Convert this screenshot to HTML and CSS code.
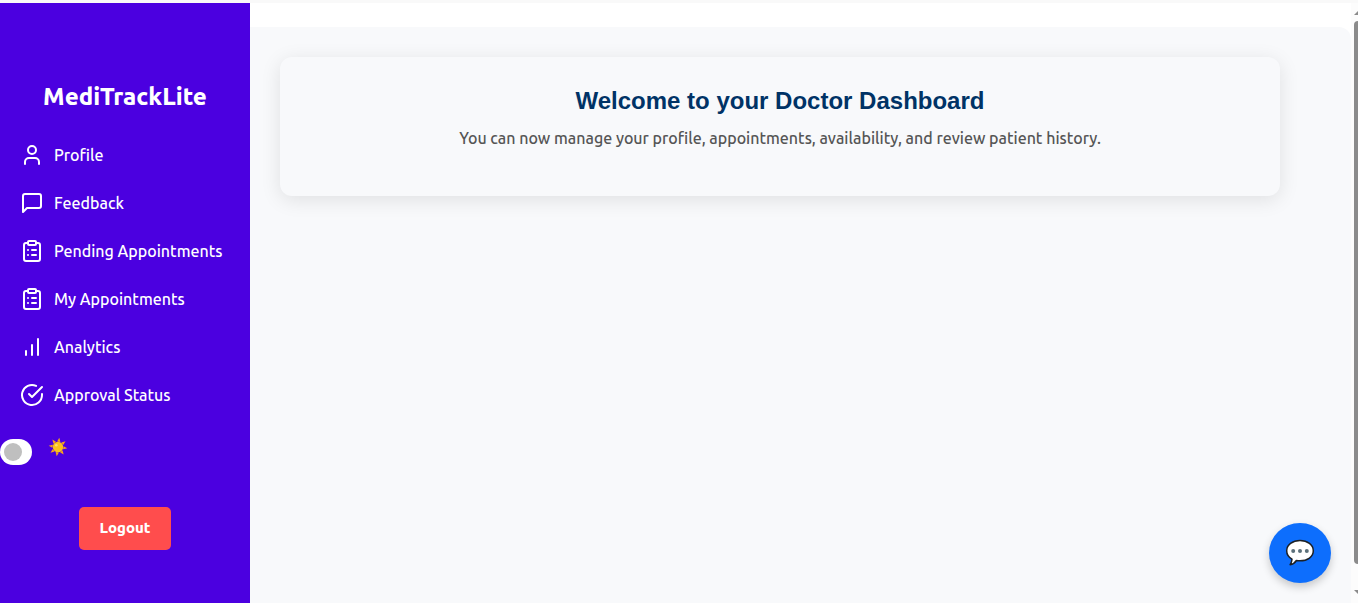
FILE: index.html
```html
<!DOCTYPE html>
<html lang="en">
<head>
<meta charset="utf-8">
<meta name="viewport" content="width=device-width, initial-scale=1">
<title>MediTrackLite</title>
<link rel="stylesheet" href="styles.css">
</head>
<body>
<div class="app">
  <aside class="sidebar">
    <h2 class="brand">MediTrackLite</h2>
    <nav class="menu">
      <a class="menu-link" href="#profile">
        <svg class="icon" viewBox="0 0 24 24" aria-hidden="true"><circle cx="12" cy="7" r="4"/><path d="M5 21v-2a4 4 0 0 1 4-4h6a4 4 0 0 1 4 4v2"/></svg>
        <span>Profile</span>
      </a>
      <a class="menu-link" href="#feedback">
        <svg class="icon" viewBox="0 0 24 24" aria-hidden="true"><path d="M21 15a2 2 0 0 1-2 2H7l-4 4V5a2 2 0 0 1 2-2h14a2 2 0 0 1 2 2z"/></svg>
        <span>Feedback</span>
      </a>
      <a class="menu-link" href="#pending">
        <svg class="icon" viewBox="0 0 24 24" aria-hidden="true"><rect x="8" y="2" width="8" height="4" rx="1"/><path d="M16 4h2a2 2 0 0 1 2 2v14a2 2 0 0 1-2 2H6a2 2 0 0 1-2-2V6a2 2 0 0 1 2-2h2M12 11h4M12 16h4M8 11h.01M8 16h.01"/></svg>
        <span>Pending Appointments</span>
      </a>
      <a class="menu-link" href="#appointments">
        <svg class="icon" viewBox="0 0 24 24" aria-hidden="true"><rect x="8" y="2" width="8" height="4" rx="1"/><path d="M16 4h2a2 2 0 0 1 2 2v14a2 2 0 0 1-2 2H6a2 2 0 0 1-2-2V6a2 2 0 0 1 2-2h2M12 11h4M12 16h4M8 11h.01M8 16h.01"/></svg>
        <span>My Appointments</span>
      </a>
      <a class="menu-link" href="#analytics">
        <svg class="icon" viewBox="0 0 24 24" aria-hidden="true"><path d="M6 20v-4M12 20V10M18 20V4"/></svg>
        <span>Analytics</span>
      </a>
      <a class="menu-link" href="#approval">
        <svg class="icon" viewBox="0 0 24 24" aria-hidden="true"><path d="M22 11.08V12a10 10 0 1 1-5.93-9.14"/><path d="M22 4L12 14.01l-3-3"/></svg>
        <span>Approval Status</span>
      </a>
    </nav>
    <div class="theme">
      <input class="theme-switch" type="checkbox" role="switch" id="theme" aria-label="Dark mode">
      <label class="theme-label" for="theme">
        <svg class="sun" viewBox="0 0 20 20" aria-hidden="true">
          <g fill="#f9a21b" transform="rotate(8 10 10)">
            <path id="ray" d="M8.4 4.600 10 .6l1.600 4z"/>
            <use href="#ray" transform="rotate(45 10 10)"/>
            <use href="#ray" transform="rotate(90 10 10)"/>
            <use href="#ray" transform="rotate(135 10 10)"/>
            <use href="#ray" transform="rotate(180 10 10)"/>
            <use href="#ray" transform="rotate(225 10 10)"/>
            <use href="#ray" transform="rotate(270 10 10)"/>
            <use href="#ray" transform="rotate(315 10 10)"/>
          </g>
          <circle cx="10" cy="10" r="5.2" fill="#fcc21b"/>
          <circle cx="8.3" cy="8.2" r="1.3" fill="#fddc6c"/>
        </svg>
      </label>
    </div>
    <button class="logout" type="button">Logout</button>
  </aside>
  <main class="main">
    <div class="panel">
      <section class="card">
        <h1 class="card-title">Welcome to your Doctor Dashboard</h1>
        <p class="card-text">You can now manage your profile, appointments, availability, and review patient history.</p>
      </section>
    </div>
  </main>
  <div class="scrollbar" aria-hidden="true">
    <svg class="arrow" viewBox="0 0 10 6"><path d="M5 1 10 6H0z"/></svg>
    <div class="thumb"></div>
    <svg class="arrow" viewBox="0 0 10 6"><path d="M0 0h10L5 5z"/></svg>
  </div>
</div>
<button class="chat" type="button" aria-label="Open chat">
  <svg class="bubble" viewBox="0 0 30 30" aria-hidden="true">
    <path d="M15 2.500C7.500 2.500 1.700 6.800 1.700 12.800c0 3.700 2.100 6.600 5.300 8.300-.1 2-.8 4-1.900 5.600 2.800-.4 5-2 6.300-4.200 1.100.2 2.400.3 3.600.3 7.500 0 13.300-4 13.300-10S22.500 2.500 15 2.500z" fill="#fff" stroke="#1c2025" stroke-width="1.500" stroke-linejoin="round"/>
    <g fill="#5c707a"><circle cx="8.200" cy="13" r="2"/><circle cx="15" cy="13" r="2"/><circle cx="21.800" cy="13" r="2"/></g>
  </svg>
</button>
</body>
</html>
```
FILE: styles.css
```css
* {
  box-sizing: border-box;
}

body {
  margin: 0;
  background: #f9f9f9;
  font-family: Ubuntu, "Noto Sans", sans-serif;
  font-size: 16px;
  font-weight: 500;
  line-height: 24px;
}

.app {
  display: flex;
  min-height: 100vh;
  padding-top: 3px;
}

.sidebar {
  display: flex;
  flex: 0 0 250px;
  flex-direction: column;
  padding-top: 76px;
  background: #4b00e0;
  color: #fff;
}

.brand {
  margin: 0 0 16px;
  font-size: 24px;
  font-weight: 800;
  line-height: 36px;
  text-align: center;
}

.menu {
  display: flex;
  flex-direction: column;
}

.menu-link {
  display: flex;
  align-items: center;
  gap: 10px;
  height: 48px;
  padding: 0 20px;
  color: #fff;
  text-decoration: none;
  white-space: nowrap;
}

.icon {
  flex: none;
  width: 24px;
  height: 24px;
  fill: none;
  stroke: currentColor;
  stroke-width: 2;
  stroke-linecap: round;
  stroke-linejoin: round;
}

.theme {
  display: flex;
  align-items: flex-start;
  gap: 16px;
  margin-top: 18px;
}

.theme-switch {
  appearance: none;
  display: flex;
  align-items: center;
  width: 32px;
  height: 26px;
  margin: 2px 0 0;
  padding: 0 4px;
  border-radius: 13px;
  background: #fff;
}

.theme-switch::before {
  content: "";
  width: 18px;
  height: 18px;
  border-radius: 50%;
  background: #bfbfbf;
}

.theme-switch:checked::before {
  margin-left: auto;
}

.theme-label {
  display: flex;
}

.sun {
  width: 20px;
  height: 20px;
}

.logout {
  align-self: center;
  margin-top: 42px;
  padding: 9px 20px 10px;
  border: 0;
  border-radius: 5px;
  background: #ff4d4d;
  color: #fff;
  font: 800 15px/24px Ubuntu, "Noto Sans", sans-serif;
}

.main {
  display: flex;
  flex: 1;
  min-width: 0;
  padding-top: 24px;
  background: #fff;
}

.panel {
  flex: 1;
  padding: 30px;
  border-top-right-radius: 12px;
  background: #f8f9fb;
}

.card {
  max-width: 1000px;
  padding: 30px 30px 46px;
  border-radius: 12px;
  background: #f8f9fb;
  box-shadow: 0 4px 20px rgba(0, 0, 0, 0.1);
  text-align: center;
}

.card-title {
  margin: 0 0 11px;
  color: #003366;
  font: bold 24px/28px "Liberation Sans", Arial, sans-serif;
}

.card-text {
  margin: 0;
  color: #555;
  line-height: 24px;
}

.scrollbar {
  display: flex;
  flex: 0 0 7px;
  flex-direction: column;
  justify-content: space-between;
  gap: 6px;
  padding: 6px 0 7px 3px;
  overflow: hidden;
  background: #fcfcfc;
}

.arrow {
  flex: none;
  width: 10px;
  height: 6px;
  fill: #8b8b8b;
}

.thumb {
  flex: none;
  width: 8px;
  height: 90vh;
  margin-bottom: auto;
  border-radius: 4px;
  background: #8b8b8b;
}

.chat {
  position: fixed;
  right: 27px;
  bottom: 20px;
  display: flex;
  align-items: center;
  justify-content: center;
  width: 62px;
  height: 60px;
  padding: 0;
  border: 0;
  border-radius: 50%;
  background: #0d6efd;
  box-shadow: 0 4px 8px rgba(0, 0, 0, 0.2);
}

.bubble {
  width: 30px;
  height: 30px;
}
```
